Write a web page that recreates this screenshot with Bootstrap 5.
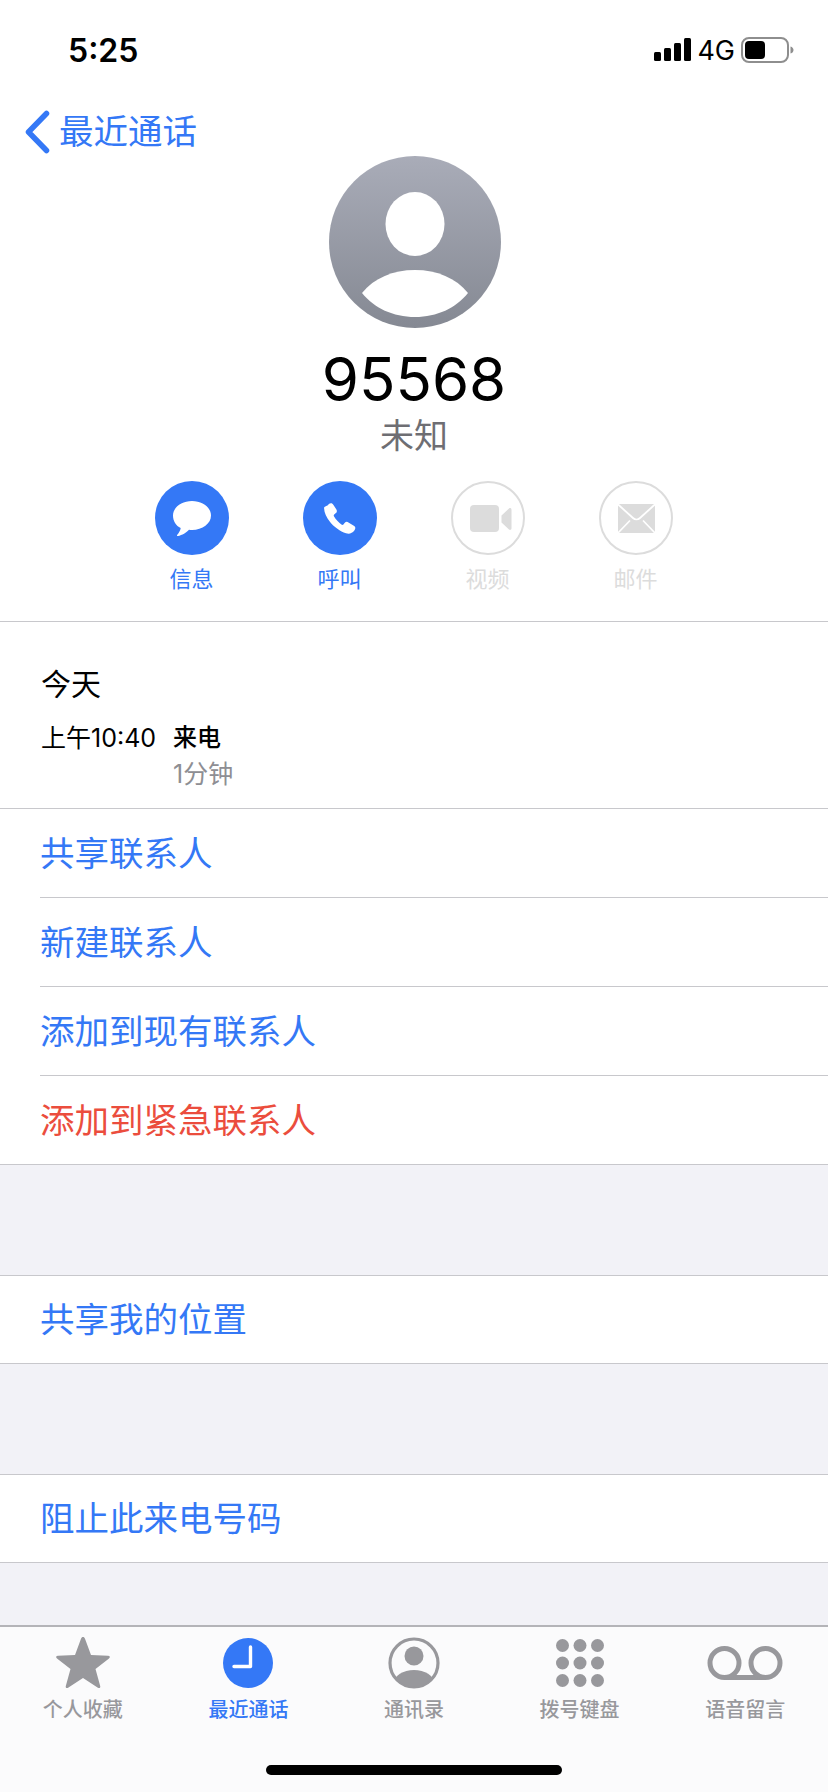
<!DOCTYPE html>
<html lang="zh-CN">
<head>
    <meta charset="UTF-8">
    <meta name="viewport" content="width=device-width, initial-scale=1.0">
    <title>95568</title>
    <link href="https://cdn.jsdelivr.net/npm/bootstrap@5.3.0/dist/css/bootstrap.min.css" rel="stylesheet">
    <style>
        html, body { background: #fff; }
        body {
            width: 828px;
            height: 1792px;
            overflow: hidden;
            font-family: "Inter", "Noto Sans CJK SC", sans-serif;
            color: #000;
        }
        .status-bar { height: 108px; padding: 37px 34px 0 68px; }
        .status-time { font-size: 32px; font-weight: 600; line-height: 28px; }
        .status-net { font-size: 27px; line-height: 28px; margin: 0 6px; }
        .nav-row { height: 48px; padding-left: 25px; color: #3478f6; font-size: 34.5px; line-height: 48px; }
        .nav-row svg { margin-right: 9px; }
        .avatar-box { height: 172px; padding-left: 1px; }
        .phone-num { font-size: 60px; line-height: 66px; margin-top: 18px; }
        .phone-sub { font-size: 34px; line-height: 40px; margin-top: 4px; color: #6e6e73; }
        .actions { gap: 74px; margin-top: 25px; height: 141px; border-bottom: 1px solid #c8c8cc; padding-right: 1px; }
        .action-item { width: 74px; font-size: 22px; line-height: 30px; color: #3478f6; white-space: nowrap; }
        .action-item svg { display: block; margin-bottom: 9px; }
        .action-off { color: #dcdcdc; }
        .history { height: 187px; padding: 44px 0 0 41px; border-bottom: 1px solid #c8c8cc; }
        .history-day { font-size: 30px; line-height: 36px; }
        .history-line { font-size: 24px; line-height: 36px; margin-top: 18px; }
        .history-time { width: 132px; font-size: 25px; }
        .history-kind { font-weight: 500; }
        .history-len { font-size: 25px; line-height: 36px; margin: 0 0 0 132px; color: #8e8e93; }
        .action-row {
            height: 89px;
            line-height: 90px;
            font-size: 34.5px;
            color: #3478f6;
            margin-left: 40px;
            border-bottom: 1px solid #c8c8cc;
        }
        .row-full { margin-left: 0; padding-left: 40px; }
        .row-top { border-top: 1px solid #c8c8cc; line-height: 87px; }
        .text-alarm { color: #eb4d3d; }
        .gap-gray { background: #f2f2f7; height: 110px; }
        .gap-last { height: 62px; }
        .tab-bar {
            height: 167px;
            background: #fbfbfc;
            border-top: 2px solid #b4b4b8;
            position: relative;
        }
        .tab-item { width: 20%; padding-top: 9px; font-size: 20px; line-height: 26px; font-weight: 500; color: #98989c; }
        .tab-item svg { display: block; margin: 0 auto 7px; }
        .tab-on { color: #3478f6; }
        .home-bar { position: absolute; left: 266px; top: 138px; width: 296px; height: 10px; border-radius: 5px; background: #000; }
    </style>
</head>
<body>
    <div class="status-bar d-flex justify-content-between">
        <div class="status-time">5:25</div>
        <div class="d-flex align-items-start">
            <svg width="37" height="25" viewBox="0 0 37 25"><rect x="0" y="15" width="7" height="9" rx="1.5"/><rect x="10" y="11" width="7" height="13" rx="1.5"/><rect x="20" y="6" width="7" height="18" rx="1.5"/><rect x="30" y="1" width="7" height="23" rx="1.5"/></svg>
            <div class="status-net">4G</div>
            <svg width="53" height="26" viewBox="0 0 53 26"><rect x="1" y="1" width="46" height="24" rx="7" fill="none" stroke="#8e8e8e" stroke-width="2"/><rect x="4" y="4" width="20" height="18" rx="4"/><path d="M49.500 9.500c2 .6 3 2 3 3.500s-1 3-3 3.500z" fill="#8e8e8e"/></svg>
        </div>
    </div>

    <div class="nav-row d-flex align-items-center">
        <svg width="25" height="44" viewBox="0 0 25 44"><path d="M21.500 3.500 3.500 22l18 18.500" fill="none" stroke="#3478f6" stroke-width="5.500" stroke-linecap="round" stroke-linejoin="round"/></svg>
        <span>最近通话</span>
    </div>

    <div class="avatar-box d-flex justify-content-center">
        <svg width="172" height="172" viewBox="0 0 172 172">
            <defs><linearGradient id="avatarFill" x1="0" y1="0" x2="0" y2="1"><stop offset="0" stop-color="#a9acb8"/><stop offset="1" stop-color="#858993"/></linearGradient></defs>
            <circle cx="86" cy="86" r="86" fill="url(#avatarFill)"/>
            <ellipse cx="86" cy="68" rx="29.500" ry="32" fill="#fff"/>
            <path d="M33 137c12-15 31-23 53-23s41 8 53 23c-12 15-31 24-53 24s-41-9-53-24z" fill="#fff"/>
        </svg>
    </div>

    <div class="phone-num text-center">95568</div>
    <div class="phone-sub text-center">未知</div>

    <div class="actions d-flex justify-content-center">
        <div class="action-item text-center">
            <svg width="74" height="74" viewBox="0 0 74 74"><circle cx="37" cy="37" r="37" fill="#3478f6"/><path d="M37 20c10.500 0 19 6.500 19 14.500S47.500 49 37 49c-1 0-2 0-3-.2-2.500 2.800-7 5.600-11 6.200-1 .1-1.300-.6-.7-1.300 1.700-2 3-4 3.400-6.700C21 45 18 40 18 34.500 18 26.500 26.500 20 37 20z" fill="#fff"/></svg>
            信息
        </div>
        <div class="action-item text-center">
            <svg width="74" height="74" viewBox="0 0 74 74"><circle cx="37" cy="37" r="37" fill="#3478f6"/><path transform="translate(-2.400 -3.200) scale(1.170)" d="M23.500 23c2-1.700 3.500-1.500 4.600.2l2.500 4c.7 1.200.5 2.200-.7 3.200l-1.200 1c-.5.500-.5 1-.1 1.700 1.500 2.500 3.800 5 6.300 6.900.6.400 1.200.4 1.700-.1l1-1.200c1-1.200 2-1.400 3.300-.6l4.600 2.900c1.600 1 1.700 2.500.3 4.300-1.700 2.100-4.200 3-7 2.100-5-1.600-10-5.200-13.600-9.600-3.200-4-5-8-5.100-11.500 0-1.800.7-1.300 3.400-3z" fill="#fff"/></svg>
            呼叫
        </div>
        <div class="action-item action-off text-center">
            <svg width="74" height="74" viewBox="0 0 74 74"><circle cx="37" cy="37" r="36" fill="#fff" stroke="#dcdcdc" stroke-width="2"/><rect x="19" y="24" width="29" height="27" rx="4" fill="#dcdcdc"/><path d="M50.500 34.500 58 27.500c1-.8 2.500-.3 2.500 1.200v18.600c0 1.500-1.500 2-2.500 1.200l-7.500-7z" fill="#dcdcdc"/></svg>
            视频
        </div>
        <div class="action-item action-off text-center">
            <svg width="74" height="74" viewBox="0 0 74 74"><circle cx="37" cy="37" r="36" fill="#fff" stroke="#dcdcdc" stroke-width="2"/><rect x="19" y="23" width="37" height="29" fill="#dcdcdc"/><path d="M18 22.500 34 37c2 1.800 5 1.800 7 0l16-14.500M18 53l13-13.500M57 53 44 39.500" fill="none" stroke="#fff" stroke-width="1.800"/></svg>
            邮件
        </div>
    </div>

    <div class="history">
        <div class="history-day">今天</div>
        <div class="history-line d-flex">
            <div class="history-time">上午10:40</div>
            <div class="history-kind">来电</div>
        </div>
        <div class="history-len">1分钟</div>
    </div>

    <div class="action-row">共享联系人</div>
    <div class="action-row">新建联系人</div>
    <div class="action-row">添加到现有联系人</div>
    <div class="action-row row-full text-alarm">添加到紧急联系人</div>
    <div class="gap-gray"></div>
    <div class="action-row row-full row-top">共享我的位置</div>
    <div class="gap-gray"></div>
    <div class="action-row row-full row-top">阻止此来电号码</div>
    <div class="gap-gray gap-last"></div>

    <div class="tab-bar d-flex">
        <div class="tab-item text-center">
            <svg width="56" height="54" viewBox="0 0 56 54"><path d="M28 1c1 0 1.500.6 2 1.800l6 16.200 17 .7c2 .1 2.500 1.500 1 2.700L40.500 33l4.700 17c.5 1.800-.8 2.700-2.300 1.700L28 42l-14.900 9.700c-1.500 1-2.800.1-2.300-1.700l4.700-17L2 22.400c-1.500-1.200-1-2.600 1-2.700l17-.7 6-16.200C26.500 1.600 27 1 28 1z" fill="#98989c"/></svg>
            个人收藏
        </div>
        <div class="tab-item tab-on text-center">
            <svg width="54" height="54" viewBox="0 0 54 54"><circle cx="27" cy="27" r="25" fill="#3478f6"/><path d="M29.500 11v19.500H13" fill="none" stroke="#fff" stroke-width="3.400" stroke-linecap="round" stroke-linejoin="round"/></svg>
            最近通话
        </div>
        <div class="tab-item text-center">
            <svg width="54" height="54" viewBox="0 0 54 54"><defs><clipPath id="ringClip"><circle cx="27" cy="27" r="23.500"/></clipPath></defs><circle cx="27" cy="27" r="24" fill="none" stroke="#98989c" stroke-width="3.200"/><circle cx="27" cy="20" r="9.500" fill="#98989c"/><ellipse cx="27" cy="47" rx="20" ry="13" fill="#98989c" clip-path="url(#ringClip)"/></svg>
            通讯录
        </div>
        <div class="tab-item text-center">
            <svg width="54" height="54" viewBox="0 0 54 54" fill="#98989c"><circle cx="9.500" cy="9.500" r="6.500"/><circle cx="27" cy="9.500" r="6.500"/><circle cx="44.500" cy="9.500" r="6.500"/><circle cx="9.500" cy="27" r="6.500"/><circle cx="27" cy="27" r="6.500"/><circle cx="44.500" cy="27" r="6.500"/><circle cx="9.500" cy="44.500" r="6.500"/><circle cx="27" cy="44.500" r="6.500"/><circle cx="44.500" cy="44.500" r="6.500"/></svg>
            拨号键盘
        </div>
        <div class="tab-item text-center">
            <svg width="76" height="54" viewBox="0 0 76 54"><path d="M17.500 41.500h41" stroke="#98989c" stroke-width="5" fill="none"/><circle cx="17.500" cy="27" r="14.500" fill="none" stroke="#98989c" stroke-width="5"/><circle cx="58.500" cy="27" r="14.500" fill="none" stroke="#98989c" stroke-width="5"/></svg>
            语音留言
        </div>
        <div class="home-bar"></div>
    </div>
</body>
</html>
